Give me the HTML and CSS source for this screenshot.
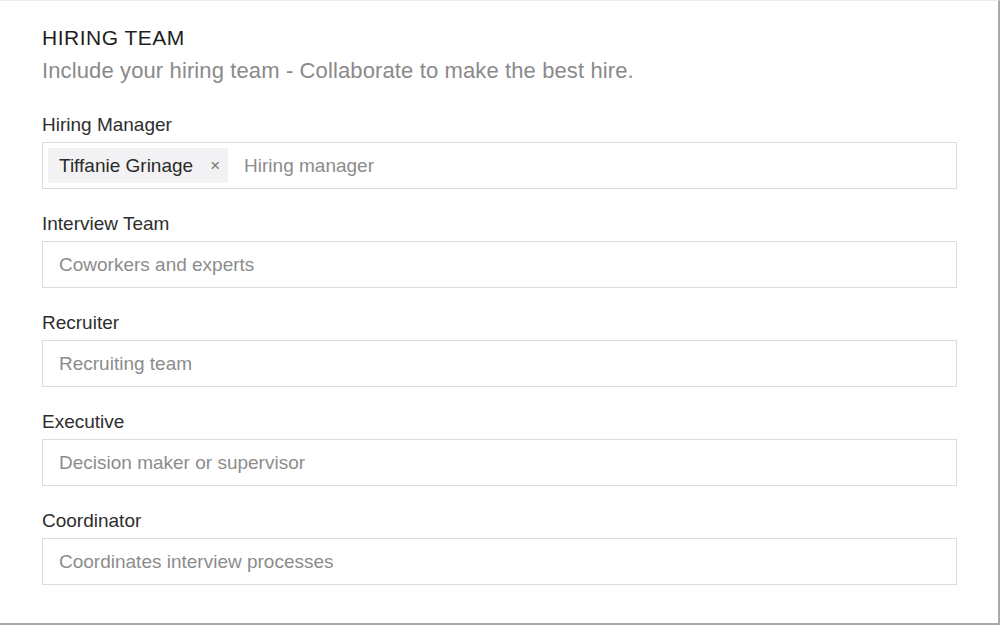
FILE: index.html
```html
<!DOCTYPE html>
<html>
<head>
<meta charset="utf-8">
<link rel="stylesheet" href="styles.css">
</head>
<body>
<div class="panel">
  <h2 class="title">HIRING TEAM</h2>
  <p class="subtitle">Include your hiring team - Collaborate to make the best hire.</p>
  <div class="field">
    <label class="label">Hiring Manager</label>
    <div class="input input-tags">
      <span class="tag">Tiffanie Grinage <span class="tag-x">×</span></span>
      <span class="placeholder">Hiring manager</span>
    </div>
  </div>
  <div class="field">
    <label class="label">Interview Team</label>
    <div class="input"><span class="placeholder">Coworkers and experts</span></div>
  </div>
  <div class="field">
    <label class="label">Recruiter</label>
    <div class="input"><span class="placeholder">Recruiting team</span></div>
  </div>
  <div class="field">
    <label class="label">Executive</label>
    <div class="input"><span class="placeholder">Decision maker or supervisor</span></div>
  </div>
  <div class="field">
    <label class="label">Coordinator</label>
    <div class="input"><span class="placeholder">Coordinates interview processes</span></div>
  </div>
</div>
</body>
</html>
```
FILE: styles.css
```css
html, body {
  margin: 0;
  padding: 0;
  background: #fff;
}
body {
  font-family: "Liberation Sans", Arial, sans-serif;
  color: #333;
}
.panel {
  box-sizing: border-box;
  width: 1000px;
  height: 625px;
  border-top: 1px solid #ececec;
  border-right: 2px solid #a9a9a9;
  border-bottom: 2px solid #a9a9a9;
  padding: 25px 41px 0 42px;
  background: #fff;
}
.title {
  margin: 0;
  font-size: 21px;
  font-weight: normal;
  color: #1e1e1e;
  line-height: 24px;
  letter-spacing: 0.5px;
}
.subtitle {
  margin: 8px 0 0;
  font-size: 22px;
  color: #8a8a8a;
  line-height: 26px;
  letter-spacing: 0.12px;
}
.field {
  margin-top: 30px;
}
.field + .field {
  margin-top: 24px;
}
.label {
  display: block;
  font-size: 19px;
  line-height: 22px;
  color: #2e2e2e;
}
.input {
  box-sizing: border-box;
  margin-top: 6px;
  height: 47px;
  border: 1px solid #dcdcdc;
  display: flex;
  align-items: center;
  padding: 0 16px;
  background: #fff;
}
.input-tags {
  padding-left: 5px;
}
.tag {
  display: flex;
  align-items: center;
  height: 35px;
  padding: 0 8px 0 11px;
  background: #f2f2f4;
  font-size: 19px;
  color: #2a2a2a;
  margin-right: 16px;
}
.tag-x {
  margin-left: 17px;
  font-size: 17px;
  color: #777;
}
.placeholder {
  font-size: 19px;
  color: #8c8c8c;
}
```
